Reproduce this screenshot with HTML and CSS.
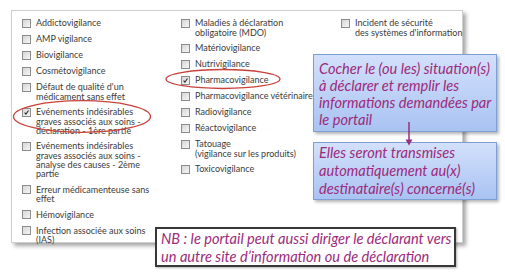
FILE: index.html
```html
<!DOCTYPE html>
<html lang="fr">
<head>
<meta charset="utf-8">
<title>Déclaration</title>
<link rel="stylesheet" href="styles.css">
</head>
<body>
<div class="stage">
  <div class="panel">
    <ul class="col">
      <li class="item"><span class="box"></span><span class="lbl">Addictovigilance</span></li>
      <li class="item"><span class="box"></span><span class="lbl">AMP vigilance</span></li>
      <li class="item"><span class="box"></span><span class="lbl">Biovigilance</span></li>
      <li class="item"><span class="box"></span><span class="lbl">Cosmétovigilance</span></li>
      <li class="item"><span class="box"></span><span class="lbl">Défaut de qualité d'un<br>médicament sans effet</span></li>
      <li class="item"><span class="box checked"><svg viewBox="0 0 10 10"><path d="M2.3 5.2 L4.2 7.4 L7.8 2.2"/></svg></span><span class="lbl">Evénements indésirables<br>graves associés aux soins -<br>déclaration - 1ère partie</span></li>
      <li class="item"><span class="box"></span><span class="lbl">Evénements indésirables<br>graves associés aux soins -<br>analyse des causes - 2ème<br>partie</span></li>
      <li class="item"><span class="box"></span><span class="lbl">Erreur médicamenteuse sans<br>effet</span></li>
      <li class="item"><span class="box"></span><span class="lbl">Hémovigilance</span></li>
      <li class="item"><span class="box"></span><span class="lbl">Infection associée aux soins<br>(IAS)</span></li>
    </ul>
    <ul class="col">
      <li class="item"><span class="box"></span><span class="lbl">Maladies à déclaration<br>obligatoire (MDO)</span></li>
      <li class="item"><span class="box"></span><span class="lbl">Matériovigilance</span></li>
      <li class="item"><span class="box"></span><span class="lbl">Nutrivigilance</span></li>
      <li class="item"><span class="box checked"><svg viewBox="0 0 10 10"><path d="M2.3 5.2 L4.2 7.4 L7.8 2.2"/></svg></span><span class="lbl">Pharmacovigilance</span></li>
      <li class="item"><span class="box"></span><span class="lbl">Pharmacovigilance vétérinaire</span></li>
      <li class="item"><span class="box"></span><span class="lbl">Radiovigilance</span></li>
      <li class="item"><span class="box"></span><span class="lbl">Réactovigilance</span></li>
      <li class="item"><span class="box"></span><span class="lbl">Tatouage<br>(vigilance sur les produits)</span></li>
      <li class="item"><span class="box"></span><span class="lbl">Toxicovigilance</span></li>
    </ul>
    <ul class="col">
      <li class="item"><span class="box"></span><span class="lbl">Incident de sécurité<br>des systèmes d'information</span></li>
    </ul>
  </div>

  <svg class="marks" viewBox="0 0 505 274" width="505" height="274">
    <ellipse cx="82" cy="116.5" rx="68.5" ry="15.8" class="ring"/>
    <ellipse cx="223" cy="79" rx="57" ry="9.5" class="ring"/>
    <line x1="409" y1="122" x2="409" y2="143" class="arrow"/>
    <path d="M405.5 139.5 L409 145.5 L412.5 139.5 Z" class="arrow-head"/>
  </svg>

  <div class="note note-1">Cocher le (ou les) situation(s)<br>à déclarer et remplir les<br>informations demandées par<br>le portail</div>
  <div class="note note-2">Elles seront transmises<br>automatiquement au(x)<br>destinataire(s) concerné(s)</div>
  <div class="nb">NB : le portail peut aussi diriger le déclarant vers<br>un autre site d’information ou de déclaration</div>
</div>
</body>
</html>
```

FILE: styles.css
```css
html, body {
  margin: 0;
  padding: 0;
  background: #ffffff;
}

.stage {
  position: relative;
  width: 505px;
  height: 274px;
  overflow: hidden;
}

.panel {
  box-sizing: border-box;
  margin: 10px 0 0 11px;
  width: 452px;
  height: 233px;
  border: 1px solid #cfcfcf;
  background: #ffffff;
  box-shadow: 3px 3px 4px rgba(0, 0, 0, 0.35);
  padding: 7.4px 0 0 10px;
  display: grid;
  grid-template-columns: 159px 160px 1fr;
  font-family: "Lato", "Noto Sans", sans-serif;
  font-size: 9px;
  color: #3b3b3b;
}

.col {
  list-style: none;
  margin: 0;
  padding: 0;
  display: flex;
  flex-direction: column;
  gap: 6.5px;
}

.item {
  display: flex;
  align-items: flex-start;
  gap: 5px;
}

.lbl {
  line-height: 9.2px;
  white-space: nowrap;
}

.box {
  box-sizing: border-box;
  flex: none;
  width: 9px;
  height: 9px;
  margin-top: 0.5px;
  border: 1px solid #8c8c8c;
  background: linear-gradient(135deg, #d6d6d6, #f6f6f6);
  display: flex;
}

.box svg {
  width: 100%;
  height: 100%;
}

.box svg path {
  fill: none;
  stroke: #222;
  stroke-width: 1.5;
}

.marks {
  position: absolute;
  left: 0;
  top: 0;
  pointer-events: none;
  z-index: 3;
}

.ring {
  fill: none;
  stroke: #c8413a;
  stroke-width: 1.3;
}

.arrow {
  stroke: #9a2f7c;
  stroke-width: 1.5;
}

.arrow-head {
  fill: #9a2f7c;
}

.note {
  position: absolute;
  box-sizing: border-box;
  left: 313px;
  width: 184px;
  border: 1px solid #7d9fd6;
  background: linear-gradient(to bottom, #d3e0fb, #a9c3f2);
  box-shadow: 2px 2px 3px rgba(0, 0, 0, 0.3);
  font-family: "Lato", "Noto Sans", sans-serif;
  font-style: italic;
  font-size: 14.6px;
  color: #9d2a7b;
  padding-left: 5px;
  white-space: nowrap;
  z-index: 2;
}

.note-1 {
  top: 54px;
  height: 78px;
  line-height: 17px;
  padding-top: 4.5px;
}

.note-2 {
  top: 142px;
  height: 58px;
  line-height: 18.2px;
  padding-top: 0.5px;
}

.nb {
  position: absolute;
  box-sizing: border-box;
  left: 155px;
  top: 227px;
  width: 301px;
  height: 40px;
  border: 2px solid #383838;
  background: #ffffff;
  box-shadow: 1px 1px 2px rgba(0, 0, 0, 0.3);
  font-family: "Lato", "Noto Sans", sans-serif;
  font-style: italic;
  font-size: 14.6px;
  line-height: 18px;
  color: #9d2a7b;
  padding: 1px 0 0 4px;
  white-space: nowrap;
  z-index: 2;
}
```
